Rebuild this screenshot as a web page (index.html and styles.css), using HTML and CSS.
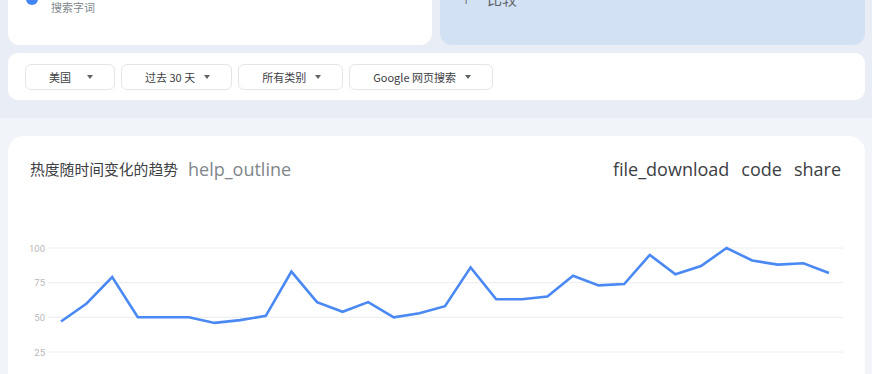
FILE: index.html
```html
<!DOCTYPE html>
<html lang="zh-CN">
<head>
<meta charset="utf-8">
<title>Google 趋势</title>
<link rel="stylesheet" href="styles.css">
</head>
<body>
<div class="top">
  <div class="terms">
    <div class="card term">
      <span class="dot"></span>
      <div class="term-text">
        <div class="term-name"></div>
        <div class="term-sub">搜索字词</div>
      </div>
    </div>
    <div class="card compare">
      <span class="plus">+</span>
      <span class="compare-label">比较</span>
    </div>
  </div>
  <div class="card filters">
    <div class="dd"><span>美国</span><i class="caret"></i></div>
    <div class="dd"><span>过去 30 天</span><i class="caret"></i></div>
    <div class="dd"><span>所有类别</span><i class="caret"></i></div>
    <div class="dd"><span>Google 网页搜索</span><i class="caret"></i></div>
  </div>
</div>
<div class="main">
  <div class="chart-card">
    <div class="chart-head">
      <div class="title"><span class="title-text">热度随时间变化的趋势</span><span class="icon-txt muted">help_outline</span></div>
      <div class="actions"><span class="icon-txt">file_download</span><span class="icon-txt">code</span><span class="icon-txt">share</span></div>
    </div>
    <svg class="chart" width="857" height="200" viewBox="0 0 857 200">
      <g class="grid">
        <line x1="40" y1="68" x2="835" y2="68"/>
        <line x1="40" y1="102.7" x2="835" y2="102.7"/>
        <line x1="40" y1="137.3" x2="835" y2="137.3"/>
        <line x1="40" y1="172" x2="835" y2="172"/>
      </g>
      <g class="ylab">
        <text x="37" y="71.5">100</text>
        <text x="37" y="106.2">75</text>
        <text x="37" y="140.8">50</text>
        <text x="37" y="175.5">25</text>
      </g>
      <polyline class="line" points="53,141.5 78.6,123.5 104.2,97.1 129.8,137.3 155.4,137.3 181,137.3 206.6,142.9 232.2,140.1 257.8,135.9 283.4,91.6 309,122.1 334.6,131.8 360.2,122.1 385.8,137.3 411.4,133.2 437,126.2 462.6,87.4 488.2,119.3 513.8,119.3 539.4,116.5 565,95.7 590.6,105.4 616.2,104.1 641.8,74.9 667.4,94.3 693,86 718.6,68 744.2,80.5 769.8,84.6 795.4,83.3 821,93"/>
    </svg>
  </div>
</div>
</body>
</html>
```
FILE: styles.css
```css
* { box-sizing: border-box; }
html, body { margin: 0; padding: 0; }
body {
  background: #f1f4f9;
  font-family: "Noto Sans CJK SC", "Noto Sans", sans-serif;
  color: #333;
  overflow: hidden;
  height: 374px;
}
.top {
  background: #e9eef6;
  padding: 0 7px 18px 8px;
}
.terms {
  display: grid;
  grid-template-columns: 424px 425px;
  gap: 8px;
  margin-top: -40px;
}
.card {
  background: #fff;
  border-radius: 12px;
}
.term {
  height: 85px;
  display: flex;
  align-items: flex-start;
  padding: 0 0 0 18px;
}
.dot {
  width: 12px;
  height: 12px;
  border-radius: 50%;
  background: #4285f4;
  margin-top: 33px;
  flex: none;
}
.term-text {
  margin-left: 13px;
  padding-top: 14px;
}
.term-name { height: 26px; }
.term-sub {
  font-size: 11px;
  line-height: 14px;
  color: #80868b;
}
.compare {
  background: #d3e1f5;
  height: 85px;
  display: flex;
  align-items: flex-start;
  padding: 28px 0 0 21px;
  color: #5f6368;
}
.plus {
  font-family: "Noto Sans", sans-serif;
  font-size: 18px;
  line-height: 22px;
  width: 26px;
  font-weight: 300;
}
.compare-label {
  font-size: 15px;
  line-height: 22px;
}
.filters {
  margin-top: 8px;
  height: 47px;
  display: flex;
  align-items: center;
  gap: 6px;
  padding: 0 17px;
  border-radius: 10px;
}
.dd {
  height: 26px;
  min-width: 90px;
  border: 1px solid #e3e5e8;
  border-radius: 6px;
  background: #fff;
  display: flex;
  align-items: center;
  justify-content: space-between;
  gap: 9px;
  padding: 0 21px 0 23px;
  font-size: 11px;
  color: #3c4043;
  cursor: pointer;
}
.caret {
  flex: none;
  width: 0;
  height: 0;
  border-left: 3.5px solid transparent;
  border-right: 3.5px solid transparent;
  border-top: 4px solid #5f6368;
}
.main {
  padding: 18px 7px 0 8px;
}
.chart-card {
  background: #fff;
  border-radius: 16px 16px 0 0;
  height: 260px;
}
.chart-head {
  display: flex;
  justify-content: space-between;
  align-items: center;
  padding: 22px 24px 0 22px;
  height: 44px;
}
.title { display: flex; align-items: center; }
.title-text {
  font-size: 14.8px;
  line-height: 22px;
  color: #3c4043;
  margin-right: 10px;
}
.icon-txt {
  font-family: "Open Sans", "Noto Sans", sans-serif;
  font-size: 18px;
  line-height: 22px;
  color: #3c4043;
}
.muted { color: #80868b; }
.actions { display: flex; gap: 12px; }
.chart { display: block; }
.grid line { stroke: #ececec; stroke-width: 1; }
.ylab text {
  font-family: Roboto, sans-serif;
  font-size: 9.5px;
  fill: #b8b8b8;
  text-anchor: end;
}
.line {
  fill: none;
  stroke: #4a89f4;
  stroke-width: 2.6;
  stroke-linejoin: miter;
}
```
